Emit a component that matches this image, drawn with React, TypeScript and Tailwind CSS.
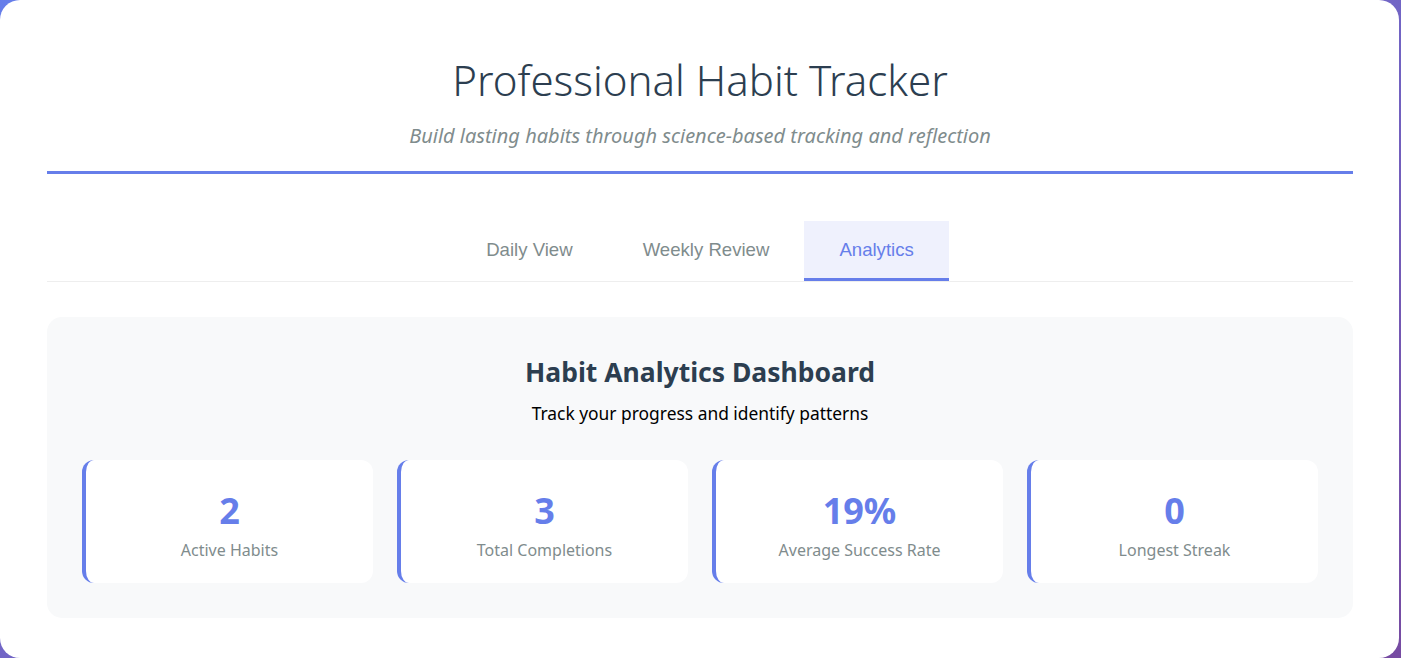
import React from "react";

const stats = [
  { value: "2", label: "Active Habits" },
  { value: "3", label: "Total Completions" },
  { value: "19%", label: "Average Success Rate" },
  { value: "0", label: "Longest Streak" },
];

export default function App() {
  return (
    <div className="min-h-[658px] w-full bg-gradient-to-br from-[#667eea] to-[#764ba2]">
      <div
        className="h-[658px] w-[1399px] overflow-hidden rounded-[20px] bg-white pl-[47px] pr-[46px]"
        style={{ fontFamily: '"Noto Sans", "Open Sans", sans-serif' }}
      >
        <header className="border-b-[3px] border-[#667eea] pt-[52px] pb-[21px] text-center">
          <h1 className="text-[42px] font-light leading-[56px] text-[#2c3e50]">
            Professional Habit Tracker
          </h1>
          <p className="mt-[14px] text-[20px] italic leading-[28px] text-[#7f8c8d]">
            Build lasting habits through science-based tracking and reflection
          </p>
        </header>

        <nav
          className="mt-[47px] flex justify-center border-b border-[#eeeeee]"
          style={{ fontFamily: '"Liberation Sans", Arial, sans-serif' }}
        >
          <button className="h-[60px] border-b-[3px] border-transparent px-[35px] text-[18.6px] text-[#7f8c8d]">
            Daily View
          </button>
          <button className="h-[60px] border-b-[3px] border-transparent px-[35px] text-[18.6px] text-[#7f8c8d]">
            Weekly Review
          </button>
          <button className="h-[60px] border-b-[3px] border-[#667eea] bg-[#eff1fd] px-[35px] text-[18.6px] text-[#667eea]">
            Analytics
          </button>
        </nav>

        <section className="mt-[35px] rounded-[15px] bg-[#f8f9fa] px-[35px] pt-[38px] pb-[35px]">
          <h2 className="text-center text-[26.5px] font-bold leading-[34px] text-[#2c3e50]">
            Habit Analytics Dashboard
          </h2>
          <p className="mt-[12px] text-center text-[17.4px] leading-[24px] text-black">
            Track your progress and identify patterns
          </p>
          <div className="mt-[35px] grid grid-cols-4 gap-[24px]">
            {stats.map((s) => (
              <div
                key={s.label}
                className="flex h-[123px] flex-col items-center rounded-[12px] border-l-4 border-[#667eea] bg-white pt-[29px]"
              >
                <div className="text-[36px] font-bold leading-[44px] text-[#667eea]">{s.value}</div>
                <div className="mt-[6px] text-[16px] leading-[22px] text-[#7f8c8d]">{s.label}</div>
              </div>
            ))}
          </div>
        </section>
      </div>
    </div>
  );
}
